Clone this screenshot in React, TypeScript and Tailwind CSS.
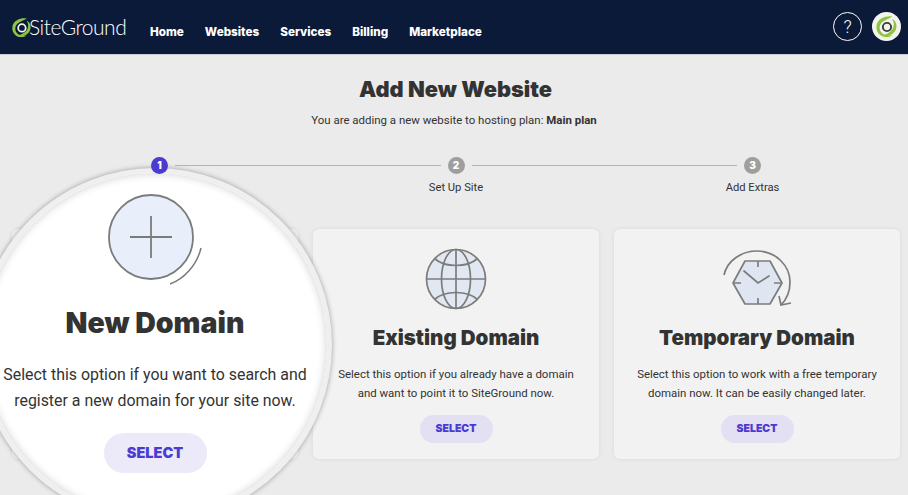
const navLinks = ["Home", "Websites", "Services", "Billing", "Marketplace"];

function Spiral({ size, ring }: { size: number; ring: string }) {
  return (
    <svg width={size} height={size} viewBox="0 0 24 24" fill="none">
      <path d="M18 1.500C11 .5 3.500 3.500 1.800 10c-1.500 6 2 12 8.200 12.800 3 .4 5.500-.2 8-1.500-4 .5-9 0-11.500-3.300C4 14.500 4.500 9.500 8 7c2.800-2 7-3 10-5.500z" fill="#8fc442" />
      <path d="M7 22c5.500 1.300 12.500-1.500 14.800-7 1.800-4.500-.3-9.500-4.300-11 2.500 3 3 7.500.5 11-2.500 3.500-7 5-11 7z" fill="#8fc442" />
      <circle cx="12.500" cy="12.500" r="4.300" stroke={ring} strokeWidth="2" fill="none" />
    </svg>
  );
}

function Step({ n, label, active }: { n: number; label?: string; active?: boolean }) {
  return (
    <div className="flex flex-col items-center w-[17px]">
      <span
        className={`flex items-center justify-center w-[17px] h-[17px] rounded-full text-[10px] font-black text-white font-['Inter'] ${
          active ? "bg-[#4a3bd1]" : "bg-[#9e9e9e]"
        }`}
      >
        {n}
      </span>
      <span className="mt-[6px] h-[16px] whitespace-nowrap text-[11.200px] leading-[16px] text-[#333]">{label}</span>
    </div>
  );
}

function PlusIcon() {
  return (
    <svg width="96" height="96" viewBox="0 0 96 96" fill="none" stroke="#7b7b7b">
      <circle cx="43" cy="43" r="42" fill="#e8eefa" strokeWidth="1.800" />
      <path d="M43 22v42M22 43h42" strokeWidth="1.800" />
      <path d="M93 54c-4 17-17 31-31 36" strokeWidth="1.500" />
    </svg>
  );
}

function GlobeIcon() {
  return (
    <svg width="62" height="62" viewBox="0 0 62 62" fill="none" stroke="#7c7c7c" strokeWidth="1.700">
      <circle cx="31" cy="31" r="29.500" fill="#e1e8f2" />
      <ellipse cx="31" cy="31" rx="14.500" ry="29.500" />
      <path d="M31 1.500v59M1.500 31h59" />
      <path d="M9.500 10.500C15 15.500 23 17.500 31 17.500s16-2 21.500-7" />
      <path d="M9.500 51.500C15 46.500 23 44.500 31 44.500s16 2 21.500 7" />
    </svg>
  );
}

function ClockIcon() {
  return (
    <svg width="70" height="60" viewBox="0 0 70 60" fill="none" stroke="#7c7c7c" strokeWidth="1.700">
      <path d="M23 11h25l12 22-12 21H23L11 33z" fill="#dfe6f1" strokeLinejoin="round" />
      <path d="M36 11v6M36 48v6M11 33h8M52 33h8" />
      <path d="M22 21l14 12 11-7" strokeLinecap="round" />
      <path d="M2 25C5 11 19 1 35 1c19 0 33 15 33 31 0 9-3 17-9 23" />
      <path d="M57 46l2 9 10-2" />
    </svg>
  );
}

function Card({
  icon,
  title,
  lines,
}: {
  icon?: React.ReactNode;
  title?: string;
  lines?: string[];
}) {
  return (
    <div className="flex flex-col items-center h-[230px] rounded-[6px] bg-[#f2f2f2] shadow-[0_0_4px_rgba(0,0,0,0.08)]">
      {title && (
        <>
          <div className="flex items-end justify-center h-[81px]">{icon}</div>
          <h2 className="mt-[12px] text-[20.500px] leading-[32px] font-black text-[#333] font-['Inter']">{title}</h2>
          <div className="mt-[11px] text-center text-[11.450px] leading-[19px] text-[#333]">
            {lines?.map((l) => (
              <p key={l}>{l}</p>
            ))}
          </div>
          <button className="mt-[12px] w-[73px] h-[28px] rounded-full bg-[#e3e0f3] text-[10.500px] font-black text-[#4a3bd1] font-['Inter']">
            SELECT
          </button>
        </>
      )}
    </div>
  );
}

export default function App() {
  return (
    <div className="relative w-[908px] h-[495px] overflow-hidden bg-[#ebebeb] font-['Roboto',sans-serif]">
      {/* Header */}
      <header className="flex items-center h-[55px] pl-[11px] pr-[7px] bg-[#0c1a3a] border-b border-[#c9ccd4]">
        <Spiral size={21} ring="#f1f5ea" />
        <span className="ml-[-3px] mb-[2px] w-[96px] whitespace-nowrap text-[21px] leading-none font-light tracking-[-0.5px] text-white font-['Lato']">
          SiteGround
        </span>
        <nav className="flex items-center gap-[21px] ml-[25px] mt-[12px] text-[11.700px] font-extrabold text-white font-['Inter']">
          {navLinks.map((link) => (
            <a key={link} href="#">
              {link}
            </a>
          ))}
        </nav>
        <div className="flex items-center gap-[10px] ml-auto mb-[2px]">
          <span className="flex items-center justify-center w-[29px] h-[29px] rounded-full border-[1.5px] border-white text-[18px] font-light text-white">
            ?
          </span>
          <span className="flex items-center justify-center w-[29px] h-[29px] rounded-full bg-[#f4f4ee]">
            <Spiral size={23} ring="#3a3f35" />
          </span>
        </div>
      </header>

      {/* Title */}
      <div className="pt-[19px] text-center text-[#333]">
        <h1 className="ml-[3px] text-[21.800px] leading-[30px] font-black font-['Inter']">Add New Website</h1>
        <p className="mt-[7px] text-[11.450px] leading-[18px]">
          You are adding a new website to hosting plan: <b className="font-bold">Main plan</b>
        </p>
      </div>

      {/* Stepper */}
      <div className="relative z-20 flex items-start mt-[28px] pl-[151px] pr-[147px]">
        <Step n={1} active />
        <div className="flex-1 h-px mt-[8px] mx-[7px] bg-[#b5b5b5]" />
        <Step n={2} label="Set Up Site" />
        <div className="flex-1 h-px mt-[8px] mx-[7px] bg-[#b5b5b5]" />
        <Step n={3} label="Add Extras" />
      </div>

      {/* Cards */}
      <div className="grid grid-cols-3 gap-[15px] mt-[33px] pl-[12px] pr-[8px]">
        <Card />
        <Card
          icon={<GlobeIcon />}
          title="Existing Domain"
          lines={["Select this option if you already have a domain", "and want to point it to SiteGround now."]}
        />
        <Card
          icon={<ClockIcon />}
          title="Temporary Domain"
          lines={["Select this option to work with a free temporary", "domain now. It can be easily changed later."]}
        />
      </div>

      {/* Magnifier */}
      <div className="absolute left-[-22px] top-[168px] z-10 w-[354px] h-[354px] rounded-full border-[5px] border-[#efefef] bg-white shadow-[0_0_5px_rgba(0,0,0,0.35),inset_0_0_8px_rgba(0,0,0,0.2)]">
        <div className="flex flex-col items-center pt-[21px]">
          <div className="ml-[2px]">
            <PlusIcon />
          </div>
          <h2 className="mt-[13px] text-[28.500px] leading-[40px] font-black text-[#333] font-['Inter']">New Domain</h2>
          <div className="mt-[19px] text-center text-[15.900px] leading-[26px] text-[#333]">
            <p>Select this option if you want to search and</p>
            <p>register a new domain for your site now.</p>
          </div>
          <button className="mt-[19px] w-[103px] h-[40px] rounded-full bg-[#ece9f9] text-[14.500px] font-black text-[#4a3bd1] font-['Inter']">
            SELECT
          </button>
        </div>
      </div>
    </div>
  );
}
